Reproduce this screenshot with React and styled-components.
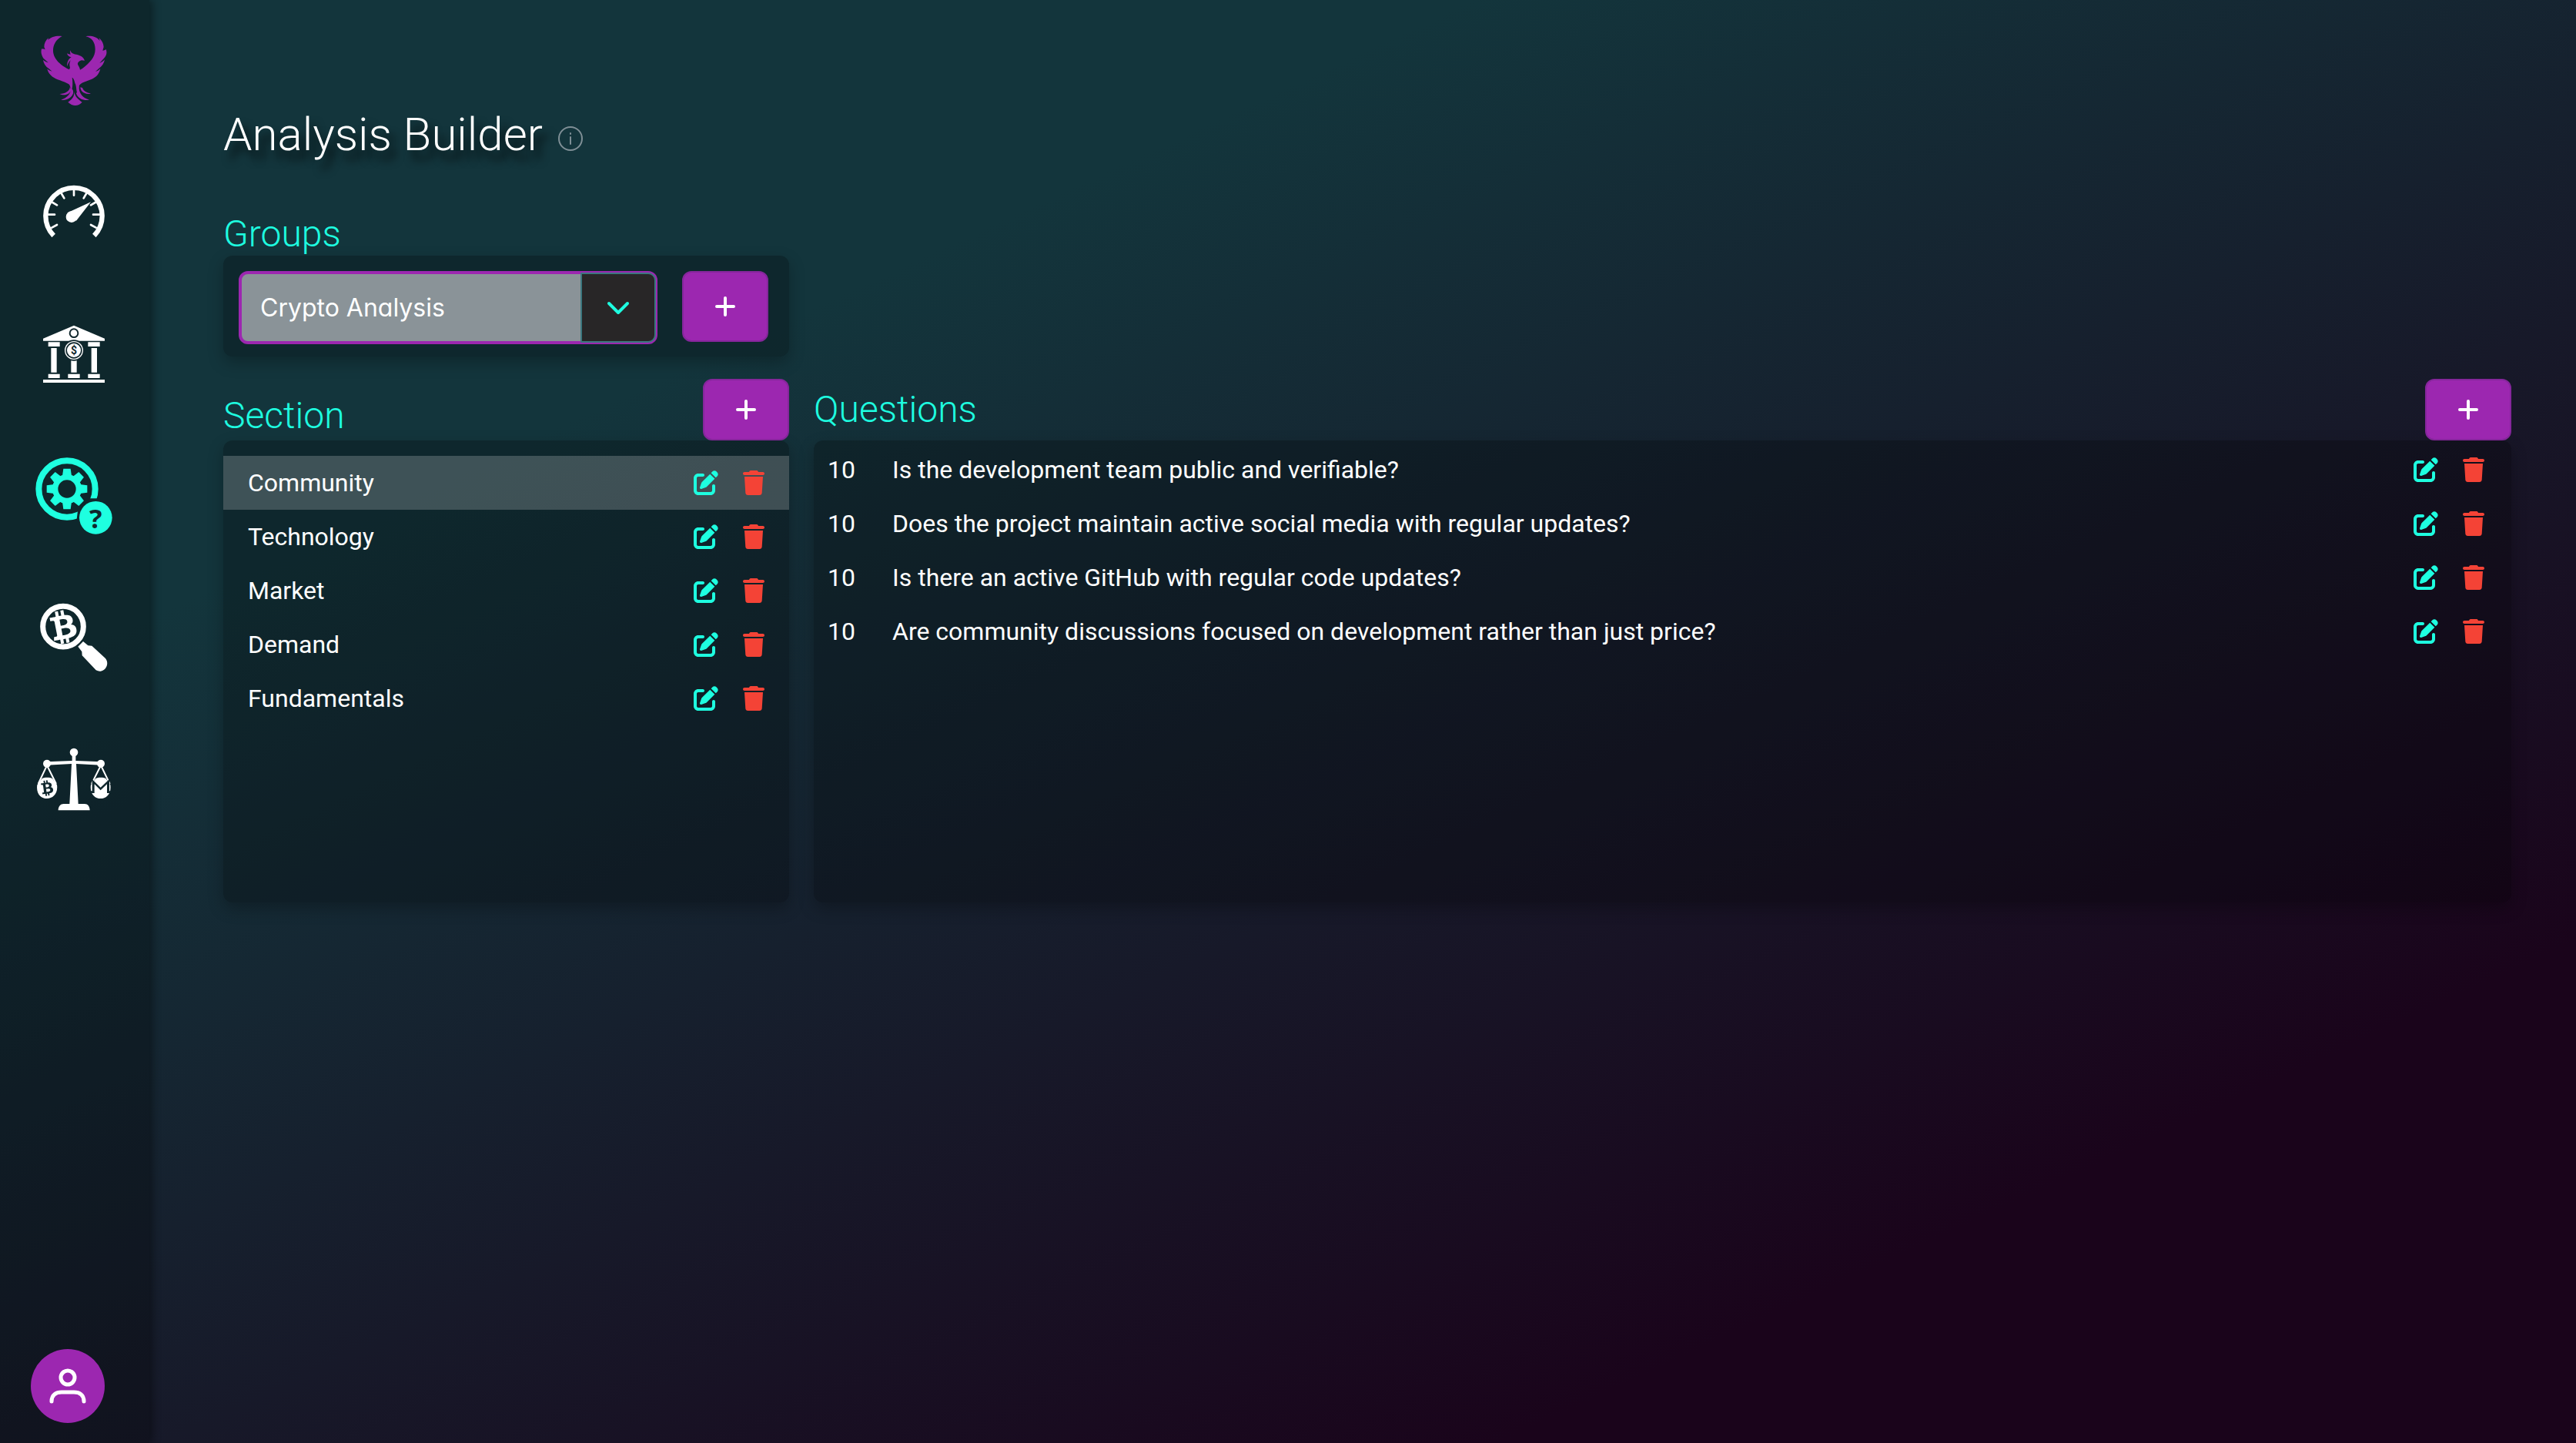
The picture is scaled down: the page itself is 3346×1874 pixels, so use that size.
import React, { useState } from "react";
import styled, { createGlobalStyle } from "styled-components";
import { FaPenToSquare, FaTrash } from "react-icons/fa6";
import { FaBtc } from "react-icons/fa";

const accent = "#1effe0";
const purple = "#9c27b0";
const danger = "#f44336";
const ink = "#10272d";

const GlobalStyle = createGlobalStyle`
  *, *::before, *::after { box-sizing: border-box; }
  body {
    margin: 0;
    font-family: Roboto, "Liberation Sans", sans-serif;
    font-size: 32px;
    color: #fff;
  }
  h1, h2 { margin: 0; font-weight: 300; }
  ul, ol { margin: 0; padding: 0; list-style: none; }
  button, select { font: inherit; color: inherit; }
`;

const Shell = styled.div`
  display: flex;
  min-height: 100vh;
  background: linear-gradient(155deg, #13353c 26%, #1a041b 81%);
`;

const Sidebar = styled.nav`
  display: flex;
  flex-direction: column;
  justify-content: space-between;
  flex: none;
  width: 194px;
  padding: 40px 2px 26px 0;
  background: rgba(0, 0, 0, 0.26);
  box-shadow: 4px 0 10px rgba(0, 0, 0, 0.4);
`;

const NavList = styled.div`
  display: flex;
  flex-direction: column;
  align-items: center;
  gap: 80px;
`;

const NavLink = styled.a`
  display: grid;
  place-items: center;
  height: 104px;
  color: ${(p) => p.$tone || "#fff"};

  svg { display: block; overflow: visible; fill: currentColor; }
`;

const Avatar = styled.button`
  display: grid;
  place-items: center;
  width: 96px;
  height: 96px;
  margin-left: 40px;
  padding: 0;
  border: 0;
  border-radius: 50%;
  background: ${purple};
`;

const Main = styled.main`
  flex: 1;
  min-width: 0;
  padding: 140px 84px 80px 96px;
`;

const TitleRow = styled.header`
  display: flex;
  align-items: center;
  gap: 20px;
  margin-bottom: 66px;
`;

const Title = styled.h1`
  font-size: 60px;
  line-height: 70px;
  text-shadow: 8px 12px 12px rgba(0, 0, 0, 0.8);
`;

const InfoButton = styled.button`
  display: grid;
  padding: 10px 0 0;
  border: 0;
  background: none;
  color: #7f8f96;
`;

const Heading = styled.h2`
  font-size: 48px;
  line-height: 56px;
  color: ${accent};
`;

const Columns = styled.div`
  display: grid;
  grid-template-columns: minmax(0, 1fr) minmax(0, 3fr);
  column-gap: 32px;
`;

const Panel = styled.div`
  border-radius: 12px;
  background: rgba(0, 0, 0, 0.25);
  box-shadow: 0 8px 20px rgba(0, 0, 0, 0.25);
`;

const GroupPanel = styled(Panel)`
  display: flex;
  align-items: flex-start;
  gap: 32px;
  margin-bottom: 29px;
  padding: 20px 27px 16px 20px;
`;

const ListPanel = styled(Panel)`
  min-height: 600px;
  padding-top: ${(p) => p.$top}px;
`;

const ColumnHeader = styled.header`
  display: flex;
  align-items: ${(p) => p.$align || "center"};
  justify-content: space-between;
  height: 80px;

  ${Heading} { padding-bottom: ${(p) => (p.$align ? 4 : 0)}px; }
`;

const AddButton = styled.button`
  display: grid;
  place-items: center;
  flex: none;
  width: 112px;
  height: ${(p) => p.$height || 80}px;
  padding: 0;
  border: 2px solid #85269b;
  border-radius: 12px;
  background: ${purple};
`;

const Dropdown = styled.div`
  display: grid;
  grid-template-columns: 1fr 96px;
  flex: 1;
  height: 95px;
  border: 4px solid ${purple};
  border-radius: 12px;
  background: #8a9398;
`;

const GroupSelect = styled.select`
  grid-area: 1 / 1 / 2 / 3;
  padding: 0 110px 0 24px;
  border: 0;
  outline: 0;
  appearance: none;
  background: transparent;
  font-family: Inter, Roboto, sans-serif;
  font-feature-settings: "cv02", "cv03", "cv04", "cv11";
`;

const DropdownArrow = styled.span`
  grid-area: 1 / 2 / 2 / 3;
  display: grid;
  place-items: center;
  margin: -2px -2px -2px 0;
  border: 2px solid #3c777f;
  border-radius: 0 10px 10px 0;
  background: #282627;
  color: ${accent};
  pointer-events: none;
`;

const SectionRow = styled.li`
  display: flex;
  align-items: center;
  height: 70px;
  padding: 0 32px;
  background: ${(p) => (p.$active ? "rgba(255, 255, 255, 0.2)" : "transparent")};
`;

const QuestionRow = styled.li`
  display: flex;
  align-items: center;
  height: 70px;
  padding: 0 35px 0 18px;
`;

const Weight = styled.span`
  flex: none;
  width: 84px;
`;

const Label = styled.span`
  flex: 1;
`;

const SectionButton = styled.button`
  flex: 1;
  padding: 0;
  border: 0;
  background: none;
  text-align: left;
`;

const Actions = styled.span`
  display: flex;
  gap: 32px;
`;

const IconButton = styled.button`
  display: grid;
  padding: 0;
  border: 0;
  background: none;
  color: ${(p) => p.$tone};

  svg { width: ${(p) => p.$width}px; height: 32px; }
`;

const PlusIcon = () => (
  <svg width="28" height="28" viewBox="0 0 28 28" stroke="#fff" strokeWidth="4" strokeLinecap="round" aria-hidden="true">
    <path d="M14 3v22M3 14h22" />
  </svg>
);

const ChevronIcon = () => (
  <svg width="32" height="32" viewBox="0 0 32 32" fill="none" stroke="currentColor" strokeWidth="4" strokeLinecap="round" strokeLinejoin="round" aria-hidden="true">
    <path d="M4 10l12 12L28 10" />
  </svg>
);

const InfoIcon = () => (
  <svg width="32" height="32" viewBox="0 0 32 32" fill="none" stroke="currentColor" strokeWidth="2" strokeLinecap="round" aria-hidden="true">
    <circle cx="16" cy="16" r="15" />
    <path d="M16 14v9M16 9v1" />
  </svg>
);

const UserIcon = () => (
  <svg width="48" height="48" viewBox="0 0 48 48" fill="none" stroke="#fff" strokeWidth="5" strokeLinecap="round" aria-hidden="true">
    <circle cx="24" cy="13" r="9" />
    <path d="M3 44c0-9 6-12 13-12h16c7 0 13 3 13 12" />
  </svg>
);

const PhoenixIcon = () => (
  <svg width="100" height="100" viewBox="138 66 300 300" aria-hidden="true">
    <path d="M242 81C222 78 200 82 187 96L189 88C177 98 172 110 172 123L176 133C169 128 164 132 162 130C158 146 163 158 170 168L188 184C181 182 171 176 168 173C170 188 178 199 190 207L203 218C195 217 187 212 184 208C188 226 200 238 216 246C232 254 254 258 268 268C273 273 275 280 274 287L277 294C284 284 284 262 281 242C289 246 290 258 294 268C299 282 296 296 303 306C311 297 307 284 309 272C322 258 350 254 366 244C378 237 388 224 391 207C387 213 380 217 372 219L385 207C398 198 406 186 408 172C403 178 396 183 388 186L405 167C415 157 418 145 413 132C410 135 406 136 400 137L404 123C403 110 398 99 386 88L389 99C376 82 352 78 334 82C358 86 371 106 371 132C371 163 350 184 322 206L312 212C311 200 301 194 303 186C306 179 312 177 318 175L330 176C326 166 320 159 309 156C302 153 292 152 288 150C280 148 275 144 275 136C272 140 273 147 275 152C270 152 265 150 261 148C263 157 270 162 278 163C268 168 261 180 261 199C265 190 267 181 275 175C270 186 270 194 273 203L270 211C246 199 228 186 216 167C199 139 206 100 242 81Z" />
    <path d="M276 284C277 304 262 321 238 329C256 333 280 322 285 304C287 294 283 286 276 284ZM288 296C291 312 284 325 265 338C274 346 284 351 293 351C303 351 313 346 320 338C302 325 292 314 288 296ZM313 280C314 295 326 309 354 305C338 300 326 296 321 282ZM272 280C273 294 254 306 232 306C254 316 273 305 277 290ZM308 286C311 306 322 322 348 329C332 333 304 328 297 304Z" />
  </svg>
);

const GaugeIcon = () => (
  <svg width="100" height="100" viewBox="138 618 300 300" aria-hidden="true">
    <g fill="none" stroke="currentColor">
      <path d="M209 858A110 110 0 1 1 367 858" strokeWidth="19" />
      <path d="M288 675v26M237 690l13 22M339 690l-13 22M200 726l22 13M376 726l-22 13M188 776h25M388 776h-25M202 827l20-11M374 827l-20-11" strokeWidth="8" strokeLinecap="round" />
    </g>
    <circle cx="279" cy="785" r="22" />
    <path d="M263 769L354 727L297 800Z" />
  </svg>
);

const BankIcon = () => (
  <svg width="100" height="100" viewBox="138 90 300 300" aria-hidden="true">
    <path d="M288 128L408 179V188H168V179Z" />
    <circle cx="288" cy="158" r="16" fill="none" stroke={ink} strokeWidth="6" />
    <path d="M188 193h45v17h-45zM343 193h46v17h-46zM199 216h22v95h-22zM356 216h22v95h-22zM277 264h22v47h-22zM188 317h45v16h-45zM265 317h46v16h-46zM343 317h46v16h-46zM168 339h240v12H168z" />
    <circle cx="288" cy="225" r="41" fill={ink} />
    <circle cx="288" cy="225" r="34" fill="none" stroke="currentColor" strokeWidth="4" />
    <circle cx="288" cy="225" r="27" />
    <text x="288" y="240" fontFamily="Roboto, sans-serif" fontWeight="700" fontSize="42" textAnchor="middle" fill={ink}>$</text>
  </svg>
);

const teeth = [0, 45, 90, 135, 180, 225, 270, 315];

const BuilderIcon = () => (
  <svg width="100" height="104" viewBox="138 636 300 312" aria-hidden="true">
    <circle cx="261" cy="765" r="110" fill="none" stroke="currentColor" strokeWidth="24" />
    <circle cx="261" cy="765" r="46" fill="none" stroke="currentColor" strokeWidth="22" />
    {teeth.map((angle) => (
      <path key={angle} d="M243 715L247 686H275L279 715Z" transform={`rotate(${angle} 261 765)`} />
    ))}
    <path d="M298 890L303 850L350 802H392V890Z" fill={ink} />
    <circle cx="373" cy="877" r="64" />
    <text x="373" y="917" fontFamily="Open Sans, sans-serif" fontWeight="700" fontSize="104" textAnchor="middle" fill={ink}>?</text>
  </svg>
);

const SearchIcon = () => (
  <svg width="100" height="100" viewBox="138 114 300 300" aria-hidden="true">
    <circle cx="246" cy="221" r="79" fill="none" stroke="currentColor" strokeWidth="21" />
    <g transform="rotate(-11 248 222)">
      <FaBtc x="184" y="158" size={128} />
    </g>
    <path d="M304 299L324 279L343 295L358 296L410 344C432 368 404 408 374 391L320 334L319 319Z" />
  </svg>
);

const ScalesIcon = () => (
  <svg width="100" height="100" viewBox="138 666 300 300" aria-hidden="true">
    <circle cx="288" cy="711" r="16" />
    <path d="M281 720H295V744L395 748V761L297 756L305 912H330C342 912 350 922 350 937H227C227 922 236 912 248 912H271L279 756L182 761V748L281 744Z" />
    <circle cx="183" cy="755" r="15" />
    <circle cx="393" cy="755" r="15" />
    <g fill="none" stroke="currentColor" strokeWidth="6">
      <path d="M183 762L149 834M183 762L219 834M393 762L357 834M393 762L428 834" />
    </g>
    <path d="M164 813C172 808 195 808 204 813L222 838C232 909 134 909 145 838ZM373 813C382 808 404 808 412 813L430 838C440 909 344 909 354 838Z" />
    <g color={ink} transform="rotate(-8 184 850)">
      <FaBtc x="154" y="820" size={60} />
    </g>
    <path d="M352 870H368V835L392 859L417 835V870H434V862H426V816L392 848L359 816V862H352Z" fill={ink} />
  </svg>
);

const nav = [
  { name: "Home", Icon: PhoenixIcon, tone: purple },
  { name: "Dashboard", Icon: GaugeIcon },
  { name: "Accounts", Icon: BankIcon },
  { name: "Analysis Builder", Icon: BuilderIcon, tone: accent },
  { name: "Research", Icon: SearchIcon },
  { name: "Compare", Icon: ScalesIcon },
];

const sections = ["Community", "Technology", "Market", "Demand", "Fundamentals"];

const questions = [
  { weight: 10, text: "Is the development team public and verifiable?" },
  { weight: 10, text: "Does the project maintain active social media with regular updates?" },
  { weight: 10, text: "Is there an active GitHub with regular code updates?" },
  { weight: 10, text: "Are community discussions focused on development rather than just price?" },
];

const RowActions = ({ name }) => (
  <Actions>
    <IconButton type="button" $tone={accent} $width={32} aria-label={`Edit ${name}`}>
      <FaPenToSquare />
    </IconButton>
    <IconButton type="button" $tone={danger} $width={28} aria-label={`Delete ${name}`}>
      <FaTrash />
    </IconButton>
  </Actions>
);

export default function App() {
  const [active, setActive] = useState("Community");

  return (
    <>
      <GlobalStyle />
      <Shell>
        <Sidebar aria-label="Main">
          <NavList>
            {nav.map(({ name, Icon, tone }) => (
              <NavLink key={name} href="#" aria-label={name} $tone={tone}>
                <Icon />
              </NavLink>
            ))}
          </NavList>
          <Avatar type="button" aria-label="Profile">
            <UserIcon />
          </Avatar>
        </Sidebar>

        <Main>
          <TitleRow>
            <Title>Analysis Builder</Title>
            <InfoButton type="button" aria-label="About this page">
              <InfoIcon />
            </InfoButton>
          </TitleRow>

          <Columns>
            <section>
              <Heading id="groups-heading">Groups</Heading>
              <GroupPanel>
                <Dropdown>
                  <GroupSelect aria-labelledby="groups-heading" defaultValue="Crypto Analysis">
                    <option>Crypto Analysis</option>
                  </GroupSelect>
                  <DropdownArrow>
                    <ChevronIcon />
                  </DropdownArrow>
                </Dropdown>
                <AddButton type="button" $height={92} aria-label="Add group">
                  <PlusIcon />
                </AddButton>
              </GroupPanel>
            </section>
          </Columns>

          <Columns>
            <section>
              <ColumnHeader $align="flex-end">
                <Heading>Section</Heading>
                <AddButton type="button" aria-label="Add section">
                  <PlusIcon />
                </AddButton>
              </ColumnHeader>
              <ListPanel $top={20}>
                <ul>
                  {sections.map((name) => (
                    <SectionRow key={name} $active={name === active}>
                      <SectionButton type="button" onClick={() => setActive(name)}>
                        {name}
                      </SectionButton>
                      <RowActions name={name} />
                    </SectionRow>
                  ))}
                </ul>
              </ListPanel>
            </section>

            <section>
              <ColumnHeader>
                <Heading>Questions</Heading>
                <AddButton type="button" aria-label="Add question">
                  <PlusIcon />
                </AddButton>
              </ColumnHeader>
              <ListPanel $top={3}>
                <ol>
                  {questions.map(({ weight, text }) => (
                    <QuestionRow key={text}>
                      <Weight>{weight}</Weight>
                      <Label>{text}</Label>
                      <RowActions name={text} />
                    </QuestionRow>
                  ))}
                </ol>
              </ListPanel>
            </section>
          </Columns>
        </Main>
      </Shell>
    </>
  );
}
